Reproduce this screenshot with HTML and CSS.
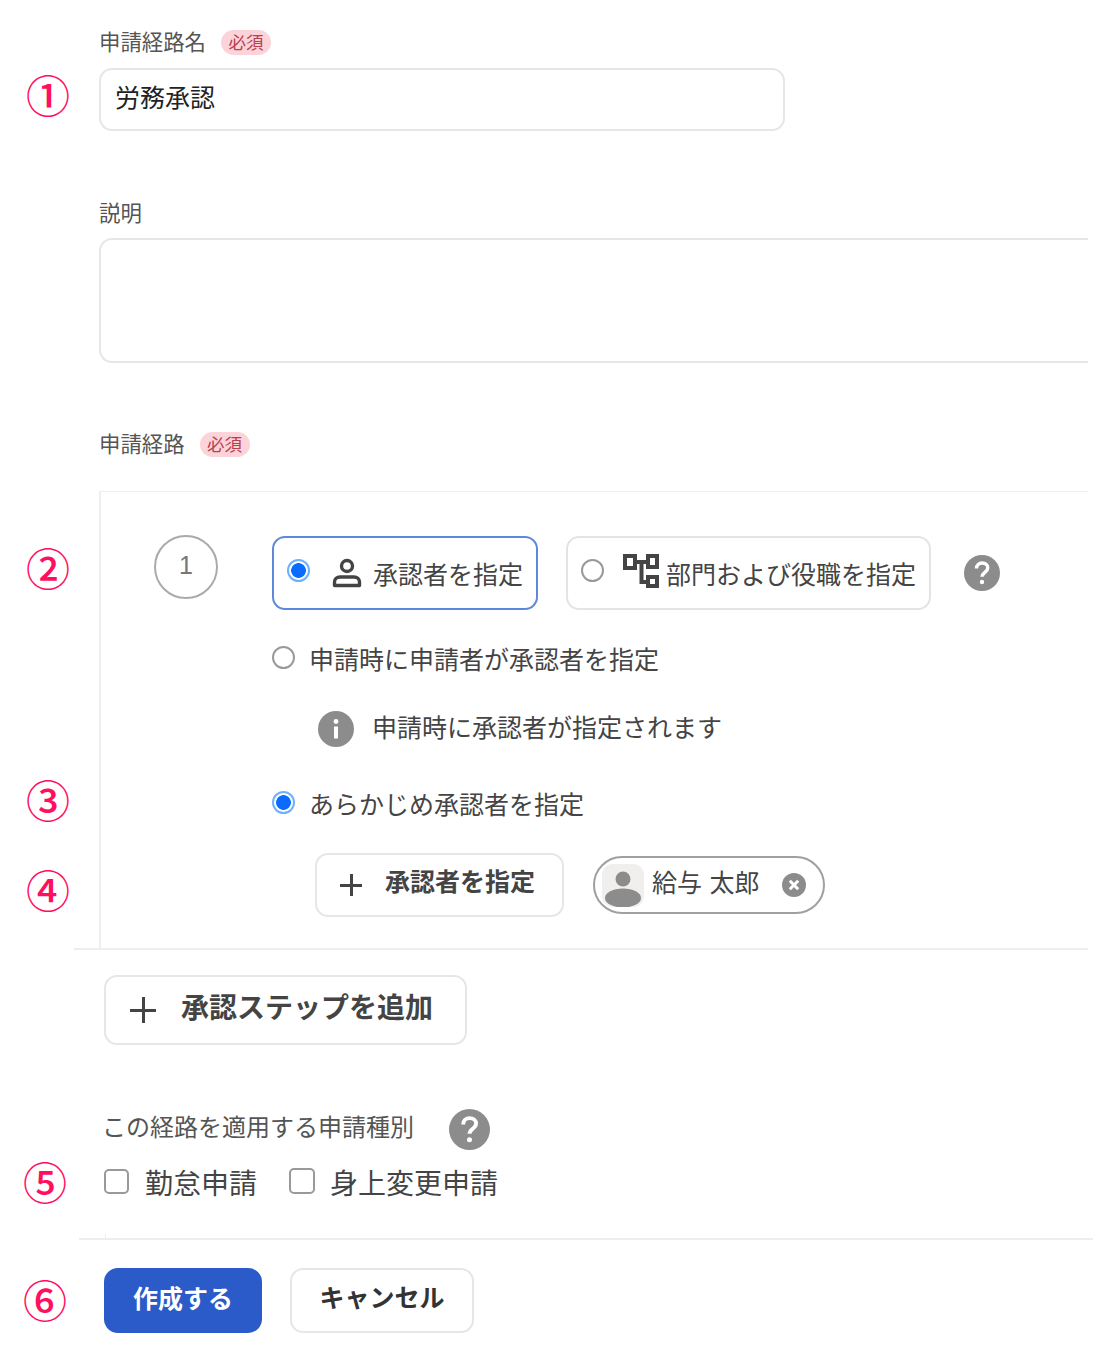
FILE: index.html
```html
<!DOCTYPE html>
<html lang="ja">
<head>
<meta charset="utf-8">
<title>申請経路</title>
<link rel="stylesheet" href="styles.css">
</head>
<body>
<div class="page">
  <span class="marker m1">①</span>
  <span class="marker m2">②</span>
  <span class="marker m3">③</span>
  <span class="marker m4">④</span>
  <span class="marker m5">⑤</span>
  <span class="marker m6">⑥</span>

  <div class="top">
    <div class="label-row"><span class="label">申請経路名</span><span class="badge">必須</span></div>
    <div class="input">労務承認</div>
    <div class="label-row second"><span class="label">説明</span></div>
    <div class="textarea"></div>
    <div class="label-row third"><span class="label">申請経路</span><span class="badge">必須</span></div>
    <div class="step">
      <div class="step-no">1</div>
      <div class="step-body">
        <div class="cards">
          <div class="card active">
            <span class="radio on"></span>
            <svg class="ico-person" viewBox="0 0 30 30"><circle cx="15" cy="8" r="5.5" fill="none" stroke="#444" stroke-width="3.400"/><path d="M2.5 27.5v-3.5c0-3 2.5-5 5.5-5h14c3 0 5.500 2 5.500 5v3.500z" fill="none" stroke="#444" stroke-width="3.400" stroke-linejoin="round"/></svg>
            <span class="card-text">承認者を指定</span>
          </div>
          <div class="card wide">
            <span class="radio"></span>
            <svg class="ico-org" viewBox="0 0 36 34"><path d="M2 2h10v12H2zM25 2h9v11h-9zM25 23h9v9h-9zM12 8h13M18.500 8v20H25" fill="none" stroke="#444" stroke-width="4"/></svg>
            <span class="card-text">部門および役職を指定</span>
          </div>
          <svg class="help" viewBox="0 0 36 36"><circle cx="18" cy="18" r="18" fill="#8c8c8c"/><path d="M12.500 13.500c0-3.500 2.500-5.500 5.700-5.500 3.200 0 5.600 2 5.600 4.800 0 4.500-5.800 4.500-5.800 9" fill="none" stroke="#fff" stroke-width="3.400"/><circle cx="18" cy="27" r="2.200" fill="#fff"/></svg>
        </div>
        <div class="radio-row first"><span class="radio"></span><span class="row-text">申請時に申請者が承認者を指定</span></div>
        <div class="info-row">
          <svg class="info" viewBox="0 0 36 36"><circle cx="18" cy="18" r="18" fill="#8c8c8c"/><circle cx="18" cy="10.500" r="2.400" fill="#fff"/><path d="M18 15.500v12" stroke="#fff" stroke-width="4"/></svg>
          <span class="row-text">申請時に承認者が指定されます</span>
        </div>
        <div class="radio-row third-row"><span class="radio on"></span><span class="row-text">あらかじめ承認者を指定</span></div>
        <div class="assign-row">
          <div class="btn assign"><span class="plus"></span><span>承認者を指定</span></div>
          <div class="chip">
            <svg class="avatar" viewBox="0 0 42 43"><rect width="42" height="43" rx="11" fill="#f0efee"/><circle cx="21" cy="15" r="7.500" fill="#8c8c8c"/><ellipse cx="21" cy="34" rx="18" ry="9.500" fill="#8c8c8c"/></svg>
            <span class="chip-name">給与 太郎</span>
            <svg class="close" viewBox="0 0 24 24"><circle cx="12" cy="12" r="12" fill="#8c8c8c"/><path d="M7.800 7.800l8.400 8.400M16.200 7.800l-8.400 8.400" stroke="#fff" stroke-width="3"/></svg>
          </div>
        </div>
      </div>
    </div>
  </div>
  <div class="line step-line"></div>

  <div class="btn add"><span class="plus big"></span><span>承認ステップを追加</span></div>

  <div class="type-head">
    <span class="type-label">この経路を適用する申請種別</span>
    <svg class="help-lg" viewBox="0 0 36 36"><circle cx="18" cy="18" r="18" fill="#8c8c8c"/><path d="M12.500 13.500c0-3.500 2.500-5.500 5.700-5.500 3.200 0 5.600 2 5.600 4.800 0 4.500-5.800 4.500-5.800 9" fill="none" stroke="#fff" stroke-width="3.400"/><circle cx="18" cy="27" r="2.200" fill="#fff"/></svg>
  </div>
  <div class="checks">
    <span class="check"></span><span class="check-text">勤怠申請</span>
    <span class="check second-check"></span><span class="check-text">身上変更申請</span>
  </div>
  <div class="line end-line"><span class="tick"></span></div>
  <div class="actions">
    <div class="btn primary">作成する</div>
    <div class="btn cancel">キャンセル</div>
  </div>
</div>
</body>
</html>
```
FILE: styles.css
```css
* { box-sizing: border-box; }
html, body { margin: 0; padding: 0; background: #fff; }
body { font-family: "Noto Sans CJK JP", "Noto Sans", sans-serif; color: #444; }
.page { position: relative; width: 1094px; height: 1363px; overflow: hidden; background: #fff; }

.marker { position: absolute; width: 44px; height: 44px; line-height: 44px; text-align: center; font-size: 44px; font-weight: 500; color: #ff0f5f; }
.m1 { left: 26px; top: 72px; }
.m2 { left: 26px; top: 545px; }
.m3 { left: 26px; top: 777px; }
.m4 { left: 26px; top: 867px; }
.m5 { left: 23px; top: 1159px; }
.m6 { left: 23px; top: 1277px; }

.top { width: 1088px; padding: 29px 0 0 99px; overflow: hidden; }
.label-row { display: flex; align-items: center; height: 26px; }
.label-row.second { margin-top: 69px; }
.label-row.third { margin-top: 68px; }
.label { margin-top: -3px; font-size: 21.400px; line-height: 26px; color: #555; }
.badge { margin-left: 15px; width: 50px; height: 25px; border-radius: 13px; background: #fbd3d9; color: #b8404f; font-size: 17.500px; line-height: 23px; text-align: center; }
.input { margin-top: 13px; width: 686px; height: 63px; padding-left: 14px; border: 2px solid #e6e6e6; border-radius: 13px; font-size: 25px; line-height: 53px; color: #222; }
.textarea { margin-top: 12px; width: 1040px; height: 125px; border: 2px solid #e6e6e6; border-radius: 13px; }

.step { display: flex; align-items: flex-start; margin-top: 34px; width: 1040px; padding: 43px 0 31px 53px; border-top: 1px solid #eee; border-left: 2px solid #eee; }
.step-no { flex: none; width: 64px; height: 64px; border: 2px solid #aaa; border-radius: 50%; text-align: center; font-family: "Liberation Sans", sans-serif; font-size: 25px; line-height: 56px; color: #777; }
.step-body { margin-left: 54px; margin-top: 1px; }
.cards { display: flex; align-items: center; }
.card { display: flex; align-items: center; width: 266px; height: 74px; padding-left: 13px; border: 2px solid #e4e4e4; border-radius: 13px; }
.card.active { border-color: #5f88dc; }
.card.wide { width: 365px; margin-left: 28px; }
.card-text, .row-text, .chip-name { font-size: 25px; line-height: 32px; color: #444; white-space: nowrap; }
.card-text { margin-top: -1px; }
.radio { flex: none; display: block; width: 23px; height: 23px; border: 2px solid #999; border-radius: 50%; background: #fff; }
.radio.on { border: 2px solid #6db0ff; background: radial-gradient(circle, #0a6cff 0 7px, #fff 7.700px); }
.card .radio { margin-top: -5px; }
.ico-person { flex: none; width: 30px; height: 30px; margin: -1px 11px 0 22px; }
.ico-org { flex: none; width: 36px; height: 34px; margin: -4px 7px 0 19px; }
.help { flex: none; width: 36px; height: 36px; margin-left: 33px; }

.radio-row { display: flex; align-items: center; height: 28px; }
.radio-row .radio { margin-top: -4px; }
.radio-row .row-text { margin: -2px 0 0 14px; }
.radio-row.first { margin-top: 35px; }
.info-row { display: flex; align-items: center; height: 36px; margin-top: 38px; padding-left: 46px; }
.info { flex: none; width: 36px; height: 36px; }
.info-row .row-text { margin: -6px 0 0 18px; }
.radio-row.third-row { margin-top: 43px; }
.assign-row { display: flex; align-items: center; margin-top: 35px; padding-left: 43px; }

.btn { display: flex; align-items: center; border: 2px solid #e6e6e6; border-radius: 13px; background: #fff; font-weight: 700; color: #444; white-space: nowrap; }
.assign { width: 249px; height: 64px; padding-left: 23px; font-size: 25px; line-height: 32px; }
.assign > span:last-child { margin: -10px 0 0 23px; }
.plus { position: relative; flex: none; display: block; width: 22px; height: 22px; background: linear-gradient(#444, #444) center / 100% 3px no-repeat, linear-gradient(#444, #444) center / 3px 100% no-repeat; }
.plus.big { width: 26px; height: 26px; }

.chip { display: flex; align-items: center; width: 232px; height: 58px; margin-left: 29px; padding-left: 7px; border: 2px solid #a0a0a0; border-radius: 29px; }
.avatar { flex: none; width: 42px; height: 43px; }
.chip-name { margin: -9px 0 0 8px; word-spacing: 2px; }
.close { flex: none; width: 24px; height: 24px; margin-left: 22px; }

.line { height: 2px; background: #eee; }
.step-line { width: 1014px; margin-left: 74px; }
.add { width: 363px; height: 70px; margin: 25px 0 0 104px; padding-left: 24px; font-size: 28px; line-height: 36px; }
.add > span:last-child { margin: -8px 0 0 25px; }

.type-head { display: flex; align-items: center; height: 41px; margin: 64px 0 0 104px; }
.type-label { font-size: 24px; line-height: 32px; color: #555; white-space: nowrap; margin: -7px 0 0 -2px; }
.help-lg { flex: none; width: 41px; height: 41px; margin-left: 35px; }

.checks { display: flex; align-items: center; height: 28px; margin: 19px 0 0 104px; }
.check { flex: none; display: block; width: 25px; height: 25px; margin-top: -4px; border: 2px solid #999; border-radius: 5px; background: #fff; }
.check.second-check { margin-left: 32px; width: 26px; height: 26px; }
.check-text { margin: -2px 0 0 16px; font-size: 28px; line-height: 36px; color: #444; white-space: nowrap; }
.second-check + .check-text { margin-left: 15px; }

.end-line { position: relative; width: 1014px; margin: 41px 0 0 79px; }
.tick { position: absolute; left: 26px; top: -4px; width: 1px; height: 4px; background: #eee; }

.actions { display: flex; margin: 28px 0 0 104px; }
.primary { justify-content: center; width: 158px; height: 65px; border: none; border-radius: 14px; background: #2a5bc8; color: #fff; font-size: 25px; padding-bottom: 8px; }
.cancel { justify-content: center; width: 184px; height: 65px; margin-left: 28px; font-size: 25px; color: #333; padding-bottom: 10px; }
```
